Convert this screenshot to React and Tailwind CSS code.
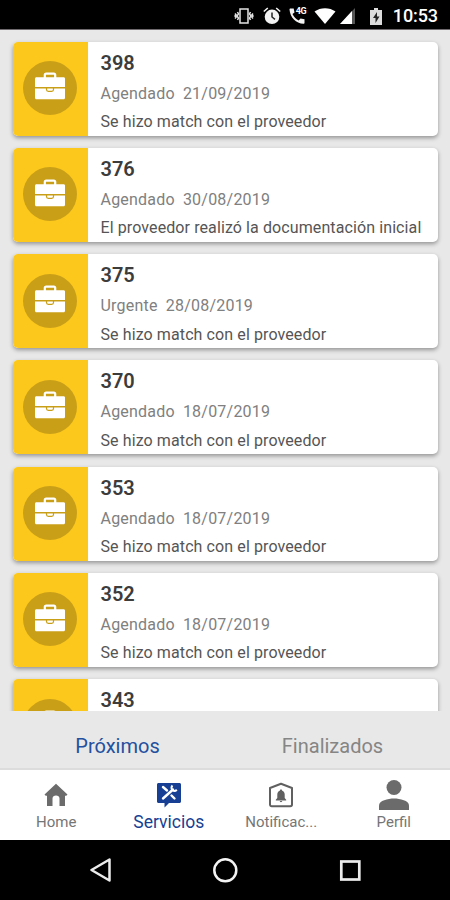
import { useState } from "react"

const services = [
  { id: 398, type: "Agendado", date: "21/09/2019", status: "Se hizo match con el proveedor" },
  { id: 376, type: "Agendado", date: "30/08/2019", status: "El proveedor realizó la documentación inicial" },
  { id: 375, type: "Urgente", date: "28/08/2019", status: "Se hizo match con el proveedor" },
  { id: 370, type: "Agendado", date: "18/07/2019", status: "Se hizo match con el proveedor" },
  { id: 353, type: "Agendado", date: "18/07/2019", status: "Se hizo match con el proveedor" },
  { id: 352, type: "Agendado", date: "18/07/2019", status: "Se hizo match con el proveedor" },
  { id: 343 }
]

function StatusBar() {
  return (
    <header className="flex h-[30px] shrink-0 items-center justify-end bg-black pr-3 pt-[3px] text-white border-b border-[#6e6a6e]">
      {/* Vibrate */}
      <svg className="w-5 h-4 mr-[9px]" viewBox="0 0 20 16" fill="none" stroke="#e4e4e4" strokeWidth="1.5">
        <rect x="6" y="1" width="8" height="14" />
        <path d="M3.500 4l1 2-1.500 2 1.500 2-1 2M1 5.500l1 1.200L1 8l1 1.300-1 1.200M16.500 4l-1 2 1.500 2-1.500 2 1 2M19 5.500l-1 1.200L19 8l-1 1.300 1 1.200" />
      </svg>
      {/* Alarm */}
      <svg className="w-[18px] h-[18px] mr-2" viewBox="0 0 18 18">
        <circle cx="9" cy="9.800" r="7.300" fill="#f2f2f2" />
        <path d="M.8 4.500l4-3.500M17.200 4.500l-4-3.500" stroke="#f2f2f2" strokeWidth="1.600" />
        <path d="M9 5.500v4.500l3 2.300" stroke="#222" strokeWidth="1.500" fill="none" />
      </svg>
      {/* Call over 4G */}
      <div className="relative w-[18px] h-[18px] mr-[7px]">
        <svg className="w-[18px] h-[18px]" viewBox="0 0 18 18" fill="#f2f2f2">
          <path d="M1.500 1.500h3.200l.8 4-2 1.600c1.400 2.900 3.300 4.900 6.200 6.300l1.800-2 4 .8v3.500c0 .6-.4 1-1 1C7 16.700 1 10.300 .5 2.500c0-.6.4-1 1-1z" />
        </svg>
        <span className="absolute top-0 left-[7px] text-[9px] leading-[9px] tracking-[-0.5px] font-bold">4G</span>
      </div>
      {/* Wifi */}
      <svg className="w-[22px] h-4 mr-1" viewBox="0 0 22 16" fill="#fff">
        <path d="M.5 3.500C6.500-1 15.500-1 21.500 3.500L11 16z" />
      </svg>
      {/* Signal */}
      <svg className="w-4 h-4 mr-3.5" viewBox="0 0 16 16">
        <path d="M15 0v16H0z" fill="#555" />
        <path d="M12 3v13H0z" fill="#fff" />
      </svg>
      {/* Battery */}
      <svg className="w-3 h-[17px] mr-[11px]" viewBox="0 0 12 17">
        <path d="M4 0h4v2h4v15H0V2h4z" fill="#dcdcdc" />
        <path d="M7 4l-4 6h2.500v5l4-6.500H7z" fill="#222" />
      </svg>
      <span className="text-[18px] leading-6 font-medium tracking-[-0.1px]">10:53</span>
    </header>
  )
}

function BriefcaseIcon() {
  return (
    <svg className="w-8 h-7" viewBox="0 0 32 28">
      <path d="M10.800 6V3c0-.9.500-1.400 1.400-1.400h7.600c.9 0 1.400.5 1.400 1.400v3" fill="none" stroke="#fff" strokeWidth="2.200" />
      <path d="M2.500 5.300h27c1 0 1.500.6 1.500 1.500v8.300H1V6.800c0-.9.500-1.500 1.500-1.500z" fill="#fff" />
      <path d="M1 16.400h30v9.400c0 .9-.5 1.500-1.500 1.500h-27c-1 0-1.500-.6-1.500-1.500z" fill="#fff" />
      <path d="M12.500 15.700v1.800c0 1.100.7 1.800 1.800 1.800h3.400c1.100 0 1.800-.7 1.800-1.800v-1.800" fill="none" stroke="#c99f18" strokeWidth="1.200" />
    </svg>
  )
}

function ServiceCard({ service }) {
  return (
    <article className="flex h-[94px] shrink-0 overflow-hidden rounded-[5px] bg-white shadow-[0_2px_4px_rgba(0,0,0,0.36)]">
      <div className="flex w-[75px] shrink-0 items-center justify-center bg-[#fcc81c] pb-px pr-px">
        <div className="flex size-[54px] items-center justify-center rounded-full bg-[#c99f18] pb-[3.5px]">
          <BriefcaseIcon />
        </div>
      </div>
      <div className="min-w-0 flex-1 whitespace-nowrap pl-[12.5px] pt-[9px]">
        <h2 className="text-[20px] leading-6 font-semibold text-[#3c3c3c]">{service.id}</h2>
        {service.status && (
          <>
            <p className="mt-[7px] text-[16px] leading-6 tracking-[0.22px] text-[#808080]">
              <span className="mr-2">{service.type}</span>
              <span>{service.date}</span>
            </p>
            <p className="mt-[4.5px] text-[16px] leading-6 tracking-[0.1px] text-[#555]">{service.status}</p>
          </>
        )}
      </div>
    </article>
  )
}

function HomeIcon() {
  return (
    <svg className="w-6 h-6" viewBox="0 0 24 24" fill="#6b6b6b">
      <path d="M12 .8L23.500 11.500l-1.200 1.300H21V23h-5.500v-7.500c0-1.700-1.500-3-3.500-3s-3.500 1.300-3.500 3V23H3V12.800H1.700L.5 11.500z" />
    </svg>
  )
}

function ServiciosIcon() {
  return (
    <svg className="w-[26px] h-[26px]" viewBox="0 0 26 26">
      <path d="M2.500 1h21c.8 0 1.500.7 1.500 1.500v17c0 .8-.7 1.500-1.500 1.500H13l-4.500 4.500V21h-6C1.700 21 1 20.300 1 19.500v-17C1 1.700 1.700 1 2.500 1z" fill="#173f94" />
      <path d="M7 16.500L17 7.500M7 5l4 3.500M15.500 13.500l3 3" stroke="#fff" strokeWidth="2.400" strokeLinecap="round" />
      <path d="M16.500 3.500c-1.500 1.500-1.200 3.500 0 4.600s3 1.100 4.300-.3" fill="none" stroke="#fff" strokeWidth="2" />
    </svg>
  )
}

function NotificacionesIcon() {
  return (
    <svg className="w-[26px] h-[26px]" viewBox="0 0 26 26">
      <path d="M2 6l11-4.200L24 6v16.500c0 1-.7 1.700-1.700 1.700H3.700c-1 0-1.700-.7-1.700-1.700z" fill="none" stroke="#606060" strokeWidth="2" strokeLinejoin="round" />
      <path d="M13 7.500c.7 0 1.200.5 1.200 1.200 1.700.5 2.500 2 2.500 3.800v3.500l1.500 1.700v.8H7.800v-.8L9.300 16v-3.500c0-1.800.8-3.300 2.500-3.800 0-.7.500-1.200 1.200-1.200zM11.800 19h2.400c0 .7-.5 1.200-1.200 1.200s-1.200-.5-1.200-1.200z" fill="#606060" />
    </svg>
  )
}

function PerfilIcon() {
  return (
    <svg className="w-[30px] h-[30px]" viewBox="0 0 30 30" fill="#6b6b6b">
      <circle cx="15" cy="7.500" r="7.500" />
      <path d="M0 30v-4.500C0 20.500 9 18.500 15 18.500s15 2 15 7V30z" />
    </svg>
  )
}

const navItems = [
  { label: "Home", Icon: HomeIcon },
  { label: "Servicios", Icon: ServiciosIcon },
  { label: "Notificac...", Icon: NotificacionesIcon },
  { label: "Perfil", Icon: PerfilIcon }
]

export default function App() {
  const [tab, setTab] = useState("Próximos")
  const [section, setSection] = useState("Servicios")

  return (
    <div className="flex h-[900px] w-[450px] flex-col overflow-hidden bg-[#e8e8e8] font-[Roboto,sans-serif]">
      <StatusBar />

      {/* Service list */}
      <main className="flex min-h-0 flex-1 flex-col gap-[12.3px] overflow-hidden pl-[13px] pr-3 pt-[11.5px]">
        {services.map((service) => (
          <ServiceCard key={service.id} service={service} />
        ))}
      </main>

      {/* Tabs */}
      <div className="flex h-[59px] shrink-0 border-b-2 border-[#dcdcdc] px-2.5">
        {["Próximos", "Finalizados"].map((name) => (
          <button
            key={name}
            onClick={() => setTab(name)}
            className={`flex-1 pt-3 text-[20px] leading-6 ${tab === name ? "text-[#2450a0]" : "text-[#858585]"}`}
          >
            {name}
          </button>
        ))}
      </div>

      {/* Bottom navigation */}
      <nav className="flex h-[70px] shrink-0 bg-white">
        {navItems.map(({ label, Icon }) => (
          <button
            key={label}
            onClick={() => setSection(label)}
            className={`flex flex-1 flex-col items-center pt-2.5 ${
              section === label ? "text-[17.5px] text-[#173f94]" : "text-[15px] text-[#757575]"
            }`}
          >
            <span className="flex h-[30px] items-center justify-center">
              <Icon />
            </span>
            <span className="mt-0.5 leading-5">{label}</span>
          </button>
        ))}
      </nav>

      {/* System buttons */}
      <footer className="flex h-[60px] shrink-0 items-center justify-between bg-black px-[88px]">
        <svg className="w-6 h-6" viewBox="0 0 24 24" fill="none" stroke="#ececec" strokeWidth="2.500" strokeLinejoin="round">
          <path d="M21.500 1.500v21L3.500 12z" />
        </svg>
        <svg className="w-[26px] h-[26px]" viewBox="0 0 26 26" fill="none" stroke="#f4f4f4" strokeWidth="2.500">
          <circle cx="13.300" cy="13.300" r="11" />
        </svg>
        <svg className="w-6 h-6" viewBox="0 0 24 24" fill="none" stroke="#ececec" strokeWidth="2.700">
          <rect x="3.300" y="3.500" width="18" height="18" />
        </svg>
      </footer>
    </div>
  )
}
